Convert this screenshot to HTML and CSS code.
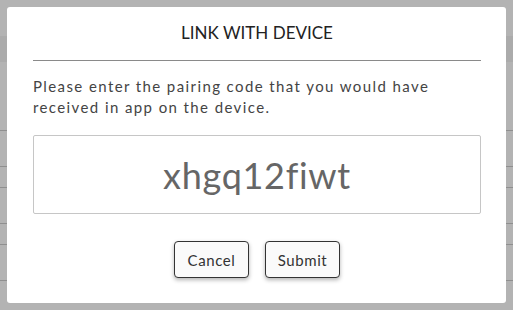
FILE: index.html
```html
<!DOCTYPE html>
<html>
<head>
<meta charset="utf-8">
<link rel="stylesheet" href="styles.css">
</head>
<body>
<div class="page">
  <div class="band"></div>
  <div class="rows">
    <div class="row r1"></div>
    <div class="row r2"></div>
    <div class="row r3"></div>
    <div class="row r4"></div>
    <div class="row r5"></div>
    <div class="row r6"></div>
  </div>
</div>
<div class="overlay">
  <div class="modal">
    <h1 class="title">LINK WITH DEVICE</h1>
    <hr class="rule">
    <p class="desc">Please enter the pairing code that you would have<br>received in app on the device.</p>
    <div class="codebox">xhgq12fiwt</div>
    <div class="actions">
      <button class="btn">Cancel</button>
      <button class="btn">Submit</button>
    </div>
  </div>
</div>
</body>
</html>
```
FILE: styles.css
```css
html, body {
  margin: 0;
  padding: 0;
  width: 513px;
  height: 310px;
  overflow: hidden;
}
body {
  background: #b3b3b3;
  font-family: "Lato", "Noto Sans", sans-serif;
}
.page {
  height: 310px;
  padding-top: 36px;
  box-sizing: border-box;
}
.band {
  height: 26px;
  background: #ababab;
}
.rows {
  padding-top: 68px;
}
.row {
  border-bottom: 1px solid #8f8f8f;
}
.r1 { height: 0; }
.r2 { height: 35px; }
.r3 { height: 20px; }
.r4 { height: 35px; }
.r5 { height: 20px; }
.r6 { height: 35px; }
.overlay {
  position: fixed;
  left: 7px;
  top: 7px;
}
.modal {
  width: 499px;
  height: 296px;
  box-sizing: border-box;
  background: #fff;
  border-radius: 3px;
  padding: 0 25px 0 26px;
  display: flex;
  flex-direction: column;
}
.title {
  margin: 16px 0 0;
  font-size: 17px;
  font-weight: 400;
  color: #222;
  text-align: center;
  line-height: 20px;
  letter-spacing: 0;
}
.rule {
  margin: 17px 0 0;
  border: 0;
  border-top: 1px solid #8a8a8a;
  height: 0;
}
.desc {
  margin: 15px 0 0;
  font-size: 15px;
  line-height: 21px;
  color: #444;
  letter-spacing: 1.4px;
}
.codebox {
  margin-top: 17px;
  height: 79px;
  box-sizing: border-box;
  border: 1px solid #c6c6c6;
  border-radius: 2px;
  display: flex;
  align-items: center;
  justify-content: center;
  font-size: 36px;
  color: #666;
  letter-spacing: 0.7px;
}
.actions {
  margin-top: 27px;
  display: flex;
  justify-content: center;
  gap: 16px;
}
.btn {
  width: 75px;
  height: 37px;
  box-sizing: border-box;
  border: 1px solid #333;
  border-radius: 4px;
  background: #fafafa;
  box-shadow: 0 2px 4px rgba(0,0,0,0.3);
  font-family: "Lato", "Noto Sans", sans-serif;
  font-size: 15px;
  color: #333;
  letter-spacing: 0.6px;
  padding: 0;
}
```
